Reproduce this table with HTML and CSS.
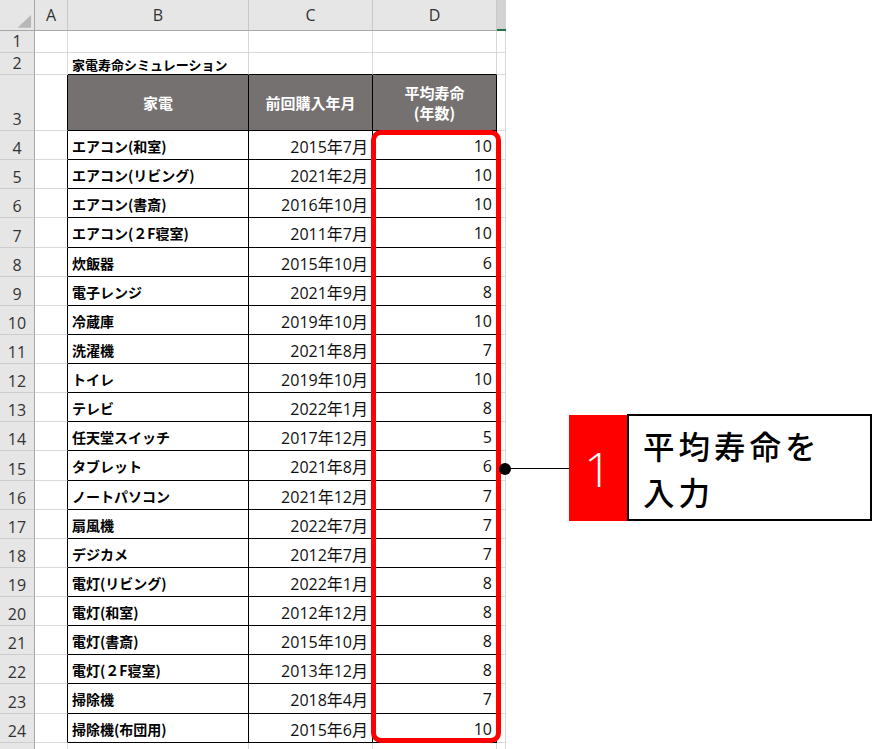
FILE: index.html
```html
<!DOCTYPE html>
<html lang="ja">
<head>
<meta charset="utf-8">
<title>家電寿命シミュレーション</title>
<link rel="stylesheet" href="styles.css">
</head>
<body>
<div class="page">
  <div class="sheet">
    <div class="c corner"><svg width="35" height="31" viewBox="0 0 35 31"><polygon points="32,15 32,28 18,28" fill="#b8b8b8"/></svg></div>
    <div class="c ch">A</div>
    <div class="c ch">B</div>
    <div class="c ch">C</div>
    <div class="c ch">D</div>
    <div class="c ch che"></div>

    <div class="c rh">1</div><div class="c"></div><div class="c"></div><div class="c"></div><div class="c"></div><div class="c"></div>

    <div class="c rh">2</div><div class="c"></div><div class="c tt title">家電寿命シミュレーション</div><div class="c tt"></div><div class="c tt"></div><div class="c"></div>

    <div class="c rh">3</div><div class="c tl"></div><div class="c t hd">家電</div><div class="c t hd">前回購入年月</div><div class="c t hd">平均寿命<br>(年数)</div><div class="c"></div>

    <div class="c rh">4</div><div class="c tl"></div><div class="c t nm">エアコン(和室)</div><div class="c t num">2015年7月</div><div class="c t num">10</div><div class="c"></div>
    <div class="c rh">5</div><div class="c tl"></div><div class="c t nm">エアコン(リビング)</div><div class="c t num">2021年2月</div><div class="c t num">10</div><div class="c"></div>
    <div class="c rh">6</div><div class="c tl"></div><div class="c t nm">エアコン(書斎)</div><div class="c t num">2016年10月</div><div class="c t num">10</div><div class="c"></div>
    <div class="c rh">7</div><div class="c tl"></div><div class="c t nm">エアコン(２F寝室)</div><div class="c t num">2011年7月</div><div class="c t num">10</div><div class="c"></div>
    <div class="c rh">8</div><div class="c tl"></div><div class="c t nm">炊飯器</div><div class="c t num">2015年10月</div><div class="c t num">6</div><div class="c"></div>
    <div class="c rh">9</div><div class="c tl"></div><div class="c t nm">電子レンジ</div><div class="c t num">2021年9月</div><div class="c t num">8</div><div class="c"></div>
    <div class="c rh">10</div><div class="c tl"></div><div class="c t nm">冷蔵庫</div><div class="c t num">2019年10月</div><div class="c t num">10</div><div class="c"></div>
    <div class="c rh">11</div><div class="c tl"></div><div class="c t nm">洗濯機</div><div class="c t num">2021年8月</div><div class="c t num">7</div><div class="c"></div>
    <div class="c rh">12</div><div class="c tl"></div><div class="c t nm">トイレ</div><div class="c t num">2019年10月</div><div class="c t num">10</div><div class="c"></div>
    <div class="c rh">13</div><div class="c tl"></div><div class="c t nm">テレビ</div><div class="c t num">2022年1月</div><div class="c t num">8</div><div class="c"></div>
    <div class="c rh">14</div><div class="c tl"></div><div class="c t nm">任天堂スイッチ</div><div class="c t num">2017年12月</div><div class="c t num">5</div><div class="c"></div>
    <div class="c rh">15</div><div class="c tl"></div><div class="c t nm">タブレット</div><div class="c t num">2021年8月</div><div class="c t num">6</div><div class="c"></div>
    <div class="c rh">16</div><div class="c tl"></div><div class="c t nm">ノートパソコン</div><div class="c t num">2021年12月</div><div class="c t num">7</div><div class="c"></div>
    <div class="c rh">17</div><div class="c tl"></div><div class="c t nm">扇風機</div><div class="c t num">2022年7月</div><div class="c t num">7</div><div class="c"></div>
    <div class="c rh">18</div><div class="c tl"></div><div class="c t nm">デジカメ</div><div class="c t num">2012年7月</div><div class="c t num">7</div><div class="c"></div>
    <div class="c rh">19</div><div class="c tl"></div><div class="c t nm">電灯(リビング)</div><div class="c t num">2022年1月</div><div class="c t num">8</div><div class="c"></div>
    <div class="c rh">20</div><div class="c tl"></div><div class="c t nm">電灯(和室)</div><div class="c t num">2012年12月</div><div class="c t num">8</div><div class="c"></div>
    <div class="c rh">21</div><div class="c tl"></div><div class="c t nm">電灯(書斎)</div><div class="c t num">2015年10月</div><div class="c t num">8</div><div class="c"></div>
    <div class="c rh">22</div><div class="c tl"></div><div class="c t nm">電灯(２F寝室)</div><div class="c t num">2013年12月</div><div class="c t num">8</div><div class="c"></div>
    <div class="c rh">23</div><div class="c tl"></div><div class="c t nm">掃除機</div><div class="c t num">2018年4月</div><div class="c t num">7</div><div class="c"></div>
    <div class="c rh">24</div><div class="c tl"></div><div class="c t nm">掃除機(布団用)</div><div class="c t num">2015年6月</div><div class="c t num">10</div><div class="c"></div>

    <div class="c rh"></div><div class="c"></div><div class="c"></div><div class="c"></div><div class="c"></div><div class="c"></div>
  </div>

  <div class="highlight"></div>
  <div class="dot"></div>
  <div class="leader"></div>
  <div class="callout">
    <div class="badge">1</div>
    <div class="label">平均寿命を<br>入力</div>
  </div>
</div>
</body>
</html>
```

FILE: styles.css
```css
body {
  margin: 0;
  background: #fff;
  font-family: "Noto Sans CJK JP", sans-serif;
  color: #000;
}

.page {
  position: relative;
  width: 873px;
  height: 749px;
  overflow: hidden;
}

.sheet {
  display: grid;
  grid-template-columns: 35px 33px 181px 124px 124px 9px;
  grid-template-rows: 31px 22px 22px 56px repeat(21, 29.14px) 20px;
  width: 506px;
}

.c {
  box-sizing: border-box;
  border-right: 1px solid #d9d9d9;
  border-bottom: 1px solid #d9d9d9;
  display: flex;
  align-items: center;
  min-width: 0;
  overflow: hidden;
  white-space: nowrap;
}

.corner {
  background: #e6e6e6;
  border-right-color: #a8a8a8;
  border-bottom-color: #a8a8a8;
  align-items: stretch;
}

.ch {
  background: #e6e6e6;
  border-right-color: #c8c8c8;
  border-bottom-color: #a8a8a8;
  justify-content: center;
  font-family: "Open Sans", sans-serif;
  font-size: 16px;
  color: #333;
}

.che {
  background: #d2d2d2;
  border-right: none;
  border-bottom: 2px solid #217346;
}

.rh {
  background: #e6e6e6;
  border-right-color: #a8a8a8;
  border-bottom-color: #cdcdcd;
  justify-content: center;
  align-items: flex-end;
  font-family: "Open Sans", sans-serif;
  font-size: 16px;
  line-height: 20px;
  padding-bottom: 1px;
  color: #333;
}

.title {
  font-weight: 700;
  font-size: 13px;
  padding-left: 4px;
  padding-top: 2px;
  overflow: visible;
}

.tt {
  border-bottom-color: #000;
}

.tl {
  border-right-color: #000;
}

.t {
  border-right-color: #000;
  border-bottom-color: #000;
}

.hd {
  background: #767171;
  color: #fff;
  font-weight: 700;
  font-size: 15px;
  line-height: 20px;
  justify-content: center;
  text-align: center;
}

.nm {
  font-weight: 700;
  font-size: 14px;
  padding-left: 4px;
  padding-top: 2px;
}

.num {
  justify-content: flex-end;
  padding-right: 4px;
  padding-top: 2px;
  font-family: "Open Sans", "Noto Sans CJK JP", sans-serif;
  font-size: 16px;
  color: #111;
}

.highlight {
  position: absolute;
  left: 371px;
  top: 130px;
  width: 130px;
  height: 613px;
  box-sizing: border-box;
  border: 5px solid #ff0000;
  border-radius: 10px;
}

.dot {
  position: absolute;
  left: 499px;
  top: 463px;
  width: 12px;
  height: 12px;
  border-radius: 50%;
  background: #000;
}

.leader {
  position: absolute;
  left: 505px;
  top: 468px;
  width: 64px;
  height: 1px;
  background: #000;
}

.callout {
  position: absolute;
  left: 569px;
  top: 414px;
  height: 107px;
  display: flex;
}

.badge {
  width: 58px;
  height: 106px;
  align-self: flex-end;
  background: #ff0000;
  color: #fff;
  font-family: "Open Sans", sans-serif;
  font-weight: 300;
  font-size: 48px;
  display: flex;
  align-items: center;
  justify-content: center;
}

.label {
  width: 245px;
  box-sizing: border-box;
  border: 2px solid #000;
  background: #fff;
  padding-left: 14px;
  font-size: 31.5px;
  letter-spacing: 4px;
  line-height: 46px;
  font-weight: 500;
  display: flex;
  align-items: center;
}
```
